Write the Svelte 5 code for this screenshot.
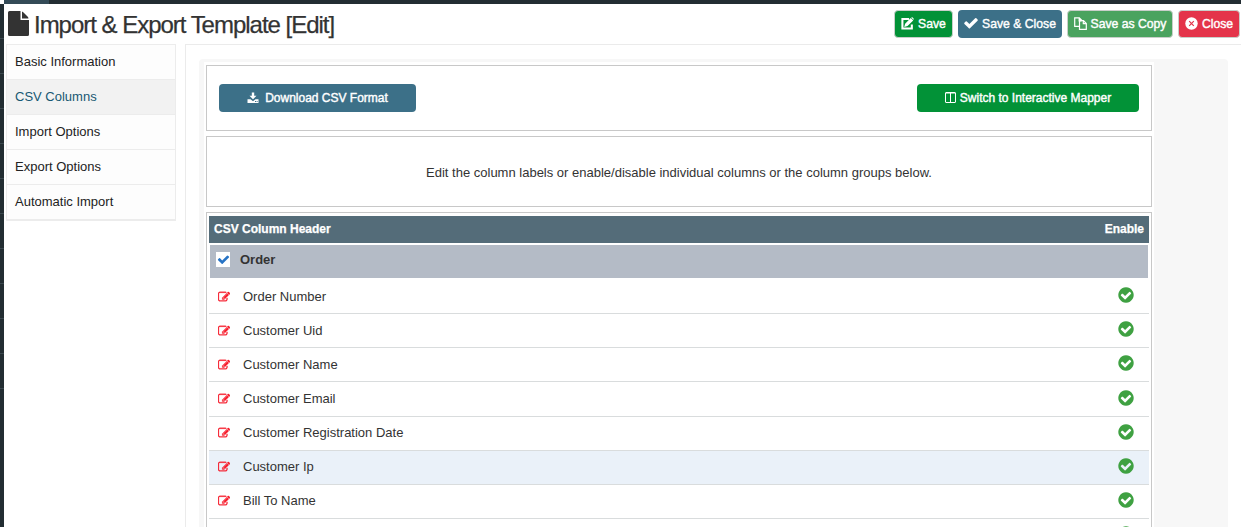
<script>
  const menu = ['Basic Information', 'CSV Columns', 'Import Options', 'Export Options', 'Automatic Import'];
  const columns = ['Order Number', 'Customer Uid', 'Customer Name', 'Customer Email', 'Customer Registration Date', 'Customer Ip', 'Bill To Name', ''];
</script>

{#snippet check()}
  <path fill="currentColor" d="M1671 566q0 40-28 68l-724 724-136 136q-28 28-68 28t-68-28l-136-136-362-362q-28-28-28-68t28-68l136-136q28-28 68-28t68 28l294 295 656-657q28-28 68-28t68 28l136 136q28 28 28 68z" />
{/snippet}

<div class="page">
  <aside class="rail">
    {#each Array(11) as _}<i></i>{/each}
  </aside>
  <div class="main">
    <div class="topbar"><span></span></div>
    <header>
      <svg class="file" viewBox="0 0 21 25"><path fill="#333" d="M1.500 0H12.500V9H21V23.500Q21 25 19.500 25H1.500Q0 25 0 23.500V1.500Q0 0 1.500 0ZM14 .5Q15 .8 15.500 1.500L19.500 5.500Q20.300 6.300 20.500 7.400H14Z" /></svg>
      <h1>Import &amp; Export Template [Edit]</h1>
      <div class="actions">
        <button class="save">
          <svg width="13" height="13" viewBox="0 0 12 12"><path d="M7.500 1.800H1.300V10.700H10V7" fill="none" stroke="currentColor" stroke-width="1.900" /><path d="M3 9.200 3.800 6.200 9 1 11.300 3.200 6 8.400ZM9.500.7 10.200 0 12 1.800 11.400 2.500Z" fill="currentColor" /></svg>
          <span>Save</span>
        </button>
        <button class="blue">
          <svg width="14" height="14" viewBox="100 100 1592 1592">{@render check()}</svg>
          <span>Save &amp; Close</span>
        </button>
        <button class="copy">
          <svg width="13" height="13" viewBox="0 0 13 13" fill="none" stroke="currentColor" stroke-width="1.200"><path d="M5 9.300H.7V.8H5.300L8 3.500V4M5.200 1V3.800H7.500" /><path d="M5.500 3.700H9.500L12.300 6.500V12.300H5.500ZM9.300 3.700V6.700H12.300" /></svg>
          <span>Save as Copy</span>
        </button>
        <button class="close">
          <svg width="13" height="13" viewBox="0 0 13 13"><circle cx="6.500" cy="6.500" r="6.200" fill="currentColor" /><path d="m4.200 4.200 4.600 4.600M8.800 4.200 4.200 8.800" stroke="#e4344a" stroke-width="1.200" /></svg>
          <span>Close</span>
        </button>
      </div>
    </header>
    <div class="body">
      <nav>
        {#each menu as item, i}<a class:active={i === 1}>{item}</a>{/each}
      </nav>
      <section class="content">
        <div class="gray">
          <div class="white">
            <div class="box tools">
              <button class="blue download">
                <svg width="12" height="12" viewBox="0 0 12 12"><path fill="currentColor" d="M4.800.5H7.200V3.800H9.500L6 7.300 2.500 3.800H4.800ZM.5 7.200H3.500L6 9.200 8.500 7.200H11.500V11H.5ZM8 9V10H9V9ZM9.600 9V10H10.600V9Z" fill-rule="evenodd" /></svg>
                <span>Download CSV Format</span>
              </button>
              <button class="green">
                <svg width="12" height="12" viewBox="0 0 12 12" fill="none" stroke="currentColor"><rect x=".5" y=".5" width="10" height="10" rx=".5" /><path d="M5.500 1V10M1 1H10" /></svg>
                <span>Switch to Interactive Mapper</span>
              </button>
            </div>
            <div class="box note">Edit the column labels or enable/disable individual columns or the column groups below.</div>
            <div class="box table">
              <div class="thead"><span>CSV Column Header</span><span>Enable</span></div>
              <div class="group">
                <span class="checkbox"><svg width="13" height="13" viewBox="0 0 1792 1792">{@render check()}</svg></span>
                <b>Order</b>
              </div>
              {#each columns as c, i}
                <div class="row" class:hover={i === 5} class:tall={i === 3} class:late={i > 3}>
                  <svg class="edit" width="12" height="12" viewBox="0 0 1792 1792"><path fill="currentColor" stroke="currentColor" stroke-width="50" d="M888 1184l116-116-152-152-116 116v56h96v96h56zm440-720q-16-16-33 1l-350 350q-17 17-1 33t33-1l350-350q17-17 1-33zm80 594v190q0 119-84.500 203.500t-203.500 84.500h-832q-119 0-203.500-84.500t-84.500-203.500v-832q0-119 84.500-203.500t203.500-84.500h832q63 0 117 25 15 7 18 23 3 17-9 29l-49 49q-14 14-32 8-23-6-45-6h-832q-66 0-113 47t-47 113v832q0 66 47 113t113 47h832q66 0 113-47t47-113v-126q0-13 9-22l64-64q15-15 35-7t20 29zm-96-738l288 288-672 672h-288v-288zm444 132l-92 92-288-288 92-92q28-28 68-28t68 28l152 152q28 28 28 68t-28 68z" /></svg>
                  <span>{c}</span>
                  <svg class="on" width="18" height="18" viewBox="0 0 1792 1792"><path fill="currentColor" d="M1412 734q0-28-18-46l-91-90q-19-19-45-19t-45 19l-408 407-226-226q-19-19-45-19t-45 19l-91 90q-18 18-18 46 0 27 18 45l362 362q19 19 45 19 27 0 46-19l543-543q18-18 18-45zm252 162q0 209-103 385.500t-279.500 279.500-385.500 103-385.500-103-279.500-279.500-103-385.500 103-385.500 279.500-279.500 385.500-103 385.500 103 279.500 279.500 103 385.500z" /></svg>
                </div>
              {/each}
            </div>
          </div>
        </div>
      </section>
    </div>
  </div>
</div>

<style>
  * { box-sizing: border-box; }
  .page { display: flex; height: 527px; overflow: hidden; background: #fff; color: #333; font: 13px/18px "Liberation Sans", Arial, sans-serif; }
  .rail { width: 4px; flex: none; margin-top: 4px; background: #222d32; }
  .rail i { display: block; height: 35px; border-bottom: 1px solid #3b484e; }
  .main { flex: 1; min-width: 0; }
  .topbar { height: 4px; background: #222d32; }
  .topbar span { display: block; width: 45px; height: 4px; background: #344b57; }
  header { display: flex; height: 40px; padding: 6px 1px 0 4px; align-items: flex-start; }
  .file { width: 21px; height: 25px; margin-top: 1px; flex: none; }
  h1 { margin: 0 0 0 5px; font-size: 24px; font-weight: 400; line-height: 30px; letter-spacing: -1.020px; white-space: nowrap; -webkit-text-stroke: .25px #333; }
  .actions { display: flex; margin-left: auto; gap: 5px; }
  button { display: flex; align-items: center; justify-content: center; height: 28px; padding: 0; border: 0; border-radius: 4px; color: #fff; font: 12px/18px "Liberation Sans", Arial, sans-serif; -webkit-text-stroke: .4px #fff; white-space: nowrap; }
  button svg { flex: none; }
  .actions button { gap: 4px; font-size: 12.200px; }
  .actions button svg { margin-top: -2px; }
  .actions .save, .actions .copy, .actions .close { border: 1px solid #c9cfca; }
  .save { width: 59px; background: #029237; }
  .blue { background: #3c7088; }
  .actions .blue { width: 104px; }
  .copy { width: 106px; background: #4aa35f; }
  .close { width: 62px; background: #e4344a; }
  .body { display: flex; height: 483px; }
  nav { width: 170px; height: 177px; margin: 0 9px 0 2px; border: 1px solid #ececec; border-bottom-width: 2px; background: #fdfdfd; flex: none; }
  nav a { display: block; height: 35px; padding: 8px 8px 0; border-bottom: 1px solid #ececec; color: #222; }
  nav a:last-child { border: 0; }
  nav .active { color: #175873; background: #f2f2f2; }
  .content { flex: 1; border: solid #ebebeb; border-width: 1px 0 0 1px; padding: 14px 13px 0; overflow: hidden; }
  .gray { background: #f7f7f7; height: 500px; border-radius: 4px 4px 0 0; padding: 3px 0 0 5px; }
  .white { background: #fff; width: 950px; padding: 3px 2px 0; }
  .box { border: 1px solid #c8c8c8; }
  .tools { height: 66px; display: flex; justify-content: space-between; padding: 18px 12px; }
  .download { width: 197px; gap: 6px; }
  .green { width: 222px; gap: 3px; background: #029237; }
  .note { height: 71px; margin: 5px 0; text-align: center; line-height: 72px; }
  .table { padding: 3px 2px 0; height: 400px; }
  .thead { display: flex; justify-content: space-between; height: 27px; padding: 0 5px; color: #fff; background: #546c79; font-size: 12px; font-weight: 700; line-height: 26px; -webkit-text-stroke: .25px #fff; }
  .group { display: flex; height: 33px; margin: 2px 1px 1px; padding: 7px 6px 0; background: #b4bbc6; }
  .group b { margin-left: 10px; line-height: 16px; }
  .checkbox { width: 14px; height: 15px; display: grid; place-items: center; background: #fff; color: #2673c5; }
  .row { display: flex; align-items: flex-start; height: 34px; border-bottom: 1px solid #d9dcdd; padding: 8px 14px 0 9px; }
  .tall { height: 35px; }
  .group + .row { height: 35px; padding-top: 9px; }
  .late { padding-top: 7px; }
  .edit { margin-top: 3px; color: #f71828; }
  .row span { margin-left: 13px; }
  .on { color: #3fa142; margin-left: auto; margin-top: -2px; }
  .tall .on, .late .on { margin-top: -1px; }
  .hover { background: #eaf1f9; }
</style>
